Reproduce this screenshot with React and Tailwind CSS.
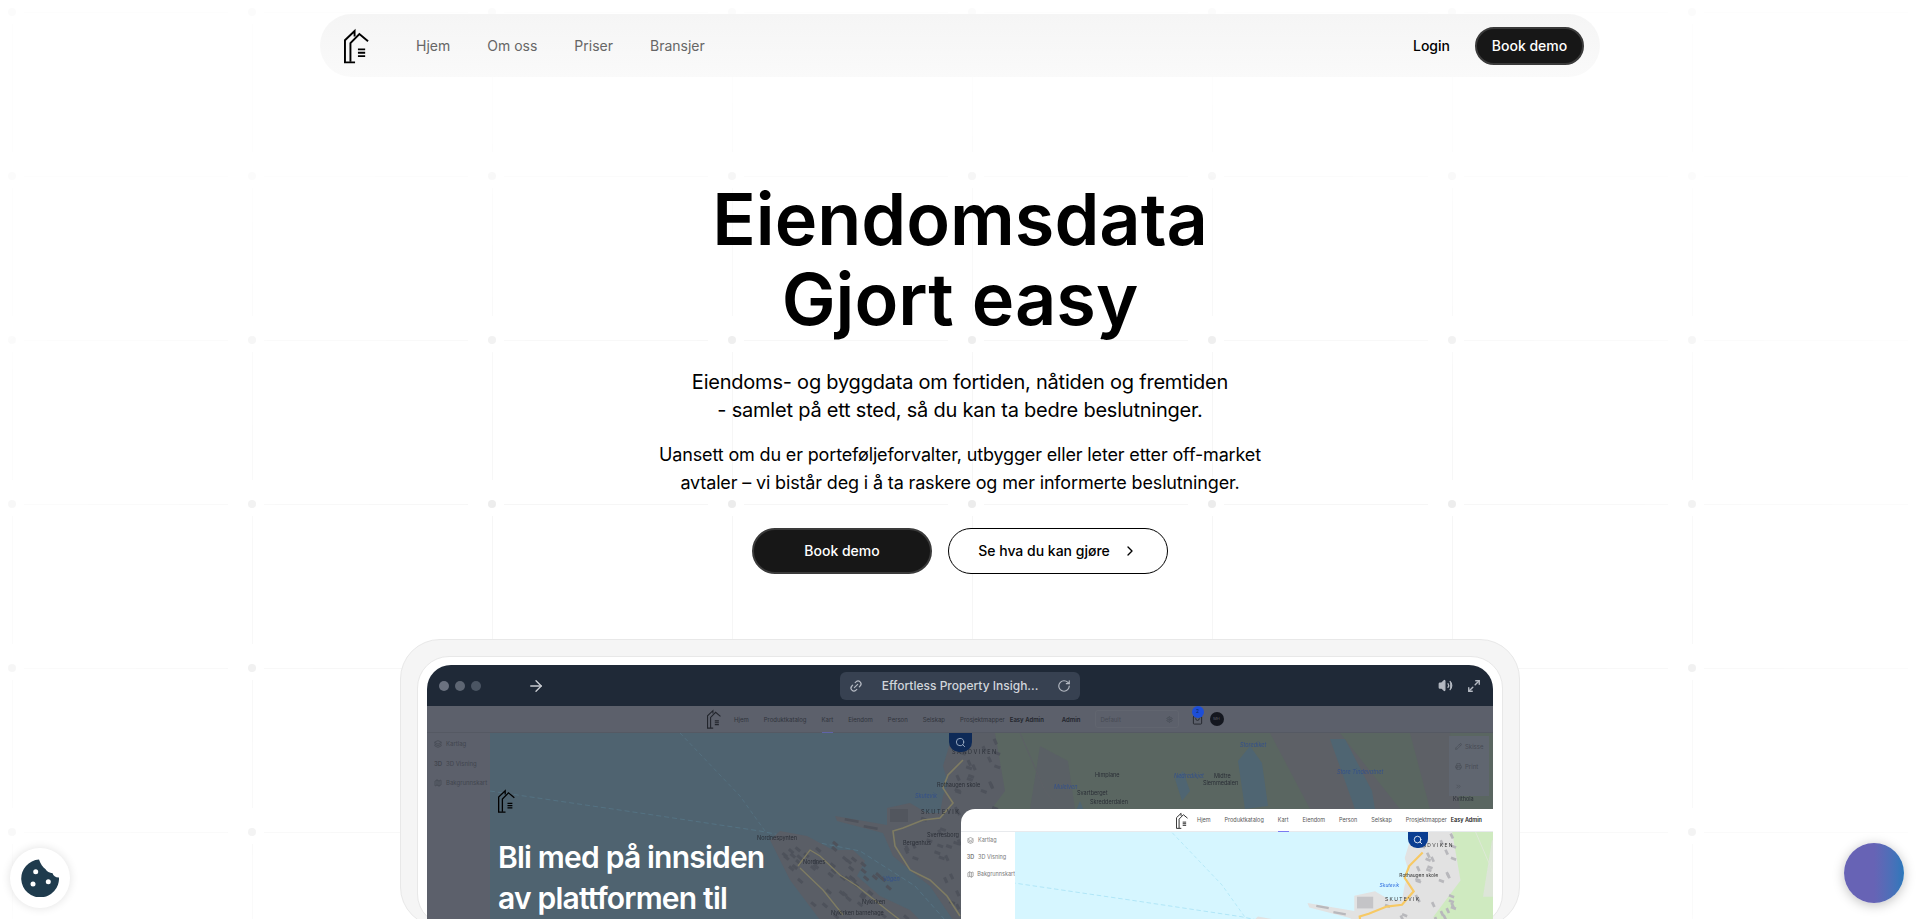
import React from 'react';
import { ArrowRight, ChevronRight, Link2, RotateCw, Volume2, Maximize2, Layers, Map as MapIcon, Search, Settings, ShoppingBag, Pencil, Printer, ChevronsRight } from 'lucide-react';

const navLinks = ['Hjem', 'Om oss', 'Priser', 'Bransjer'];
const appLinks = ['Hjem', 'Produktkatalog', 'Kart', 'Eiendom', 'Person', 'Selskap', 'Prosjektmapper'];

const darkMap = { water: '#4f6370', land: '#5a5e66', green: '#5a6661', strip: '#5d6066', lake: '#4f6572', road: '#7f7c62', roadWidth: 1.6, building: '#4e525b', label: '#2a2e36', blue: '#34508a', route: '#587c8e', labelLimit: 919, labelRight: 1494 };
const lightMap = { water: '#d6f6ff', land: '#e2e2e2', green: '#cfeac0', strip: '#dfe8d8', lake: '#c4ecf7', road: '#f7c964', roadWidth: 2.4, building: '#b8b8bc', label: '#333333', blue: '#2f6fe0', route: '#8fd8f0', labelLimit: 830, labelRight: 1000 };

const waterfront = '953,732 943,765 948,782 943,795 940,812 927,812 910,802 887,807 887,824 835,815 837,820 883,832 893,855 917,875 930,885 953,919 1500,919 1500,732';
const nordnes = '770,839 780,830 807,835 833,849 853,849 865,860 857,875 880,895 910,909 920,919 820,919 790,879';

const mapLabels = [
  ['Nordnespynten', 757, 839], ['Nordnes', 803, 863], ['Nykirken', 862, 903], ['Nykirken barnehage', 831, 914],
  ['Bergenhus', 903, 844], ['Sverresborg', 927, 836], ['S K U T E V I K', 921, 813], ['Rothaugen skole', 937, 786],
  ['S A N D V I K E N', 952, 753], ['Himplane', 1095, 776], ['Svartberget', 1077, 794], ['Skredderdalen', 1090, 803],
  ['Midtre', 1214, 777], ['Slemmedalen', 1203, 784], ['Kvithola', 1453, 800],
];
const blueLabels = [
  ['Skutevik', 915, 797], ['Vågen', 883, 880], ['Mulelven', 1054, 788], ['Nedredikjet', 1174, 777],
  ['Storediket', 1240, 746], ['Store Tindevatnet', 1337, 773],
];

const rnd = (i, k) => Math.abs(Math.sin(i * k) * 43758.5453) % 1;

// city blocks: first lot on the Nordnes peninsula, the rest on the mainland
const nordnesBlocks = Array.from({ length: 70 }, (_, i) => ({ x: 775 + rnd(i, 12.9898) * 130, y: 835 + rnd(i, 78.233) * 84, r: 40 }))
  .filter((b) => b.y <= 837 + (b.x - 770) * 1.5 && b.y >= 842 + (b.x - 853) * 1.04 && b.y >= 836);
const mainBlocks = Array.from({ length: 130 }, (_, i) => ({ x: 895 + rnd(i, 39.346) * 105, y: 735 + rnd(i, 11.135) * 180, r: i % 2 ? 65 : 20 }))
  .filter((b) => (b.y < 815 ? b.x > 955 : b.y < 860 ? b.x > 905 : b.x > 925 + (b.y - 860) * 0.5));
const blocks = [...nordnesBlocks, ...mainBlocks];

const MapShapes = ({ c }) => {
  const fits = ([, x, y]) => y < c.labelLimit && x < c.labelRight;
  return (
    <>
      <rect x="400" y="700" width="1200" height="300" fill={c.water} />
      <polyline points="490,790 640,812 760,830 860,850 915,885 945,919" fill="none" stroke={c.route} strokeWidth="0.6" strokeDasharray="5 3" />
      <polyline points="680,732 740,795 765,830" fill="none" stroke={c.route} strokeWidth="0.5" strokeDasharray="4 3" />
      <polygon points={waterfront} fill={c.land} />
      <polygon points={nordnes} fill={c.land} />
      <polygon points="995,732 1500,732 1500,919 985,919 975,830 1005,790" fill={c.green} />
      <polygon points="1040,745 1068,760 1075,808 1030,808" fill={c.land} opacity="0.7" />
      <polygon points="1270,732 1340,732 1400,808 1310,808" fill={c.strip} />
      <polygon points="1410,732 1450,732 1460,808 1430,808" fill={c.strip} />
      <polygon points="1238,760 1250,745 1262,762 1268,805 1245,808" fill={c.lake} />
      <polygon points="1330,738 1345,738 1372,790 1375,808 1355,808" fill={c.lake} />
      <polygon points="1175,778 1183,770 1190,790 1182,800" fill={c.lake} />
      <polygon points="1074,815 1080,800 1086,815" fill={c.lake} />
      {blocks.map((b, i) => (
        <rect key={i} x={b.x} y={b.y} width="6" height="3" fill={c.building} transform={`rotate(${b.r} ${b.x} ${b.y})`} />
      ))}
      <rect x="890" y="808" width="18" height="13" fill={c.building} opacity="0.7" />
      <rect x="845" y="817" width="14" height="2.5" fill={c.building} transform="rotate(10 845 817)" />
      <rect x="864" y="824" width="14" height="2.5" fill={c.building} transform="rotate(10 864 824)" />
      <polyline points="963,759 948,774 943,787 953,802 940,817 923,819 903,827 893,830 895,845 910,869 930,879 947,895 960,915" fill="none" stroke={c.road} strokeWidth={c.roadWidth} />
      <polyline points="798,865 810,849 820,855 840,874 857,885 887,909 900,919" fill="none" stroke={c.road} strokeWidth="1.3" />
      <polyline points="800,867 823,889 843,914" fill="none" stroke={c.road} strokeWidth="1.3" />
      <polyline points="1020,732 1045,790 1060,808" fill="none" stroke={c.strip} strokeWidth="1" />
      {mapLabels.filter(fits).map(([t, x, y]) => (
        <text key={t} x={x} y={y} fontSize="5.5" fill={c.label} fontFamily="Inter, sans-serif">{t}</text>
      ))}
      {blueLabels.filter(fits).map(([t, x, y]) => (
        <text key={t} x={x} y={y} fontSize="5.5" fontStyle="italic" fill={c.blue} fontFamily="Inter, sans-serif">{t}</text>
      ))}
    </>
  );
};

const Logo = ({ className }) => (
  <svg viewBox="0 0 26 36" fill="none" stroke="currentColor" strokeWidth="2" className={className}>
    <path d="M11.5 35H1V12L11 2.5V8" />
    <path d="M6.7 34.5V15L16 5.5L25 13" />
    <path d="M14.5 21.5H22M14.5 25H22M14.5 28.5H22" strokeWidth="2" />
  </svg>
);

const GridBackdrop = () => (
  <svg className="absolute inset-0 h-full w-full [mask-image:radial-gradient(ellipse_1150px_580px_at_960px_640px,black_45%,rgba(0,0,0,0.2)_100%)]">
    <defs>
      <pattern id="dots" x="0" y="0" width="240" height="164" patternUnits="userSpaceOnUse">
        <circle cx="12" cy="12" r="4" fill="#ececec" />
        <path d="M24 12.5H228M12.5 24V152" stroke="#f6f6f6" strokeWidth="1" />
      </pattern>
    </defs>
    <rect width="100%" height="100%" fill="url(#dots)" />
  </svg>
);

const SideItem = ({ icon, label }) => (
  <div className="flex h-[19.5px] items-center gap-[3px]">
    <span className="flex w-[10px] justify-center">{icon}</span>
    <span>{label}</span>
  </div>
);

const sideItems = (size) => [
  { icon: <Layers size={size} />, label: 'Kartlag' },
  { icon: <span className="font-semibold">3D</span>, label: '3D Visning' },
  { icon: <MapIcon size={size} />, label: 'Bakgrunnskart' },
];

const DemoScreen = () => (
  <div className="h-[260px] overflow-hidden rounded-t-[24px] bg-[#1f2937] font-['Inter',sans-serif]">
    <div className="grid h-[41px] grid-cols-[1fr_240px_1fr] items-center px-[12px]">
      <div className="flex items-center">
        <span className="h-[10px] w-[10px] rounded-full bg-[#6b7280]" />
        <span className="ml-[6px] h-[10px] w-[10px] rounded-full bg-[#5e6673]" />
        <span className="ml-[6px] h-[10px] w-[10px] rounded-full bg-[#4b5563]" />
        <ArrowRight size={18} strokeWidth={1.8} className="ml-[46px] text-[#c9ccd2]" />
      </div>
      <div className="flex h-[28px] items-center justify-between rounded-[6px] bg-[#374151] px-[9px] text-[12px] text-[#d1d5db]">
        <Link2 size={14} className="-rotate-45 text-[#b4b9c2]" />
        <span className="font-medium">Effortless Property Insigh...</span>
        <RotateCw size={14} className="text-[#b4b9c2]" />
      </div>
      <div className="flex items-center justify-end gap-[14px] text-[#b4b9c2]">
        <Volume2 size={15} fill="currentColor" />
        <Maximize2 size={14} strokeWidth={2.4} />
      </div>
    </div>

    <div className="flex h-[27px] items-center border-b border-[#555963] bg-[#5c606b] pl-[280px] text-[6px] text-[#30343c]">
      <Logo className="h-[20px] w-[14px] text-[#22252c]" />
      <div className="ml-[13px] flex items-center gap-[15px]">
        {appLinks.map((l) => (
          <span key={l} className="relative">
            {l}
            {l === 'Kart' && <span className="absolute -bottom-[9px] left-0 h-px w-full bg-[#5f64a8]" />}
          </span>
        ))}
      </div>
      <span className="ml-[5px] font-semibold text-[#22252c]">Easy Admin</span>
      <span className="ml-[18px] font-semibold text-[#22252c]">Admin</span>
      <div className="ml-[14px] flex h-[18px] w-[84px] items-center justify-between rounded-[3px] border border-[#61656f] px-[5px] text-[#474b54]">
        Default
        <Settings size={7} />
      </div>
      <div className="relative ml-[13px] text-[#22252c]">
        <ShoppingBag size={11} />
        <span className="absolute -top-[8px] -right-[1px] flex h-[12px] w-[12px] items-center justify-center rounded-full bg-[#1d4ed8] text-[5px] text-[#0f2a66]">2</span>
      </div>
      <span className="ml-[7px] flex h-[14px] w-[14px] items-center justify-center rounded-full bg-[#14171f] text-[4px] text-[#5c606b]">MH</span>
    </div>

    <div className="flex h-[192px]">
      <aside className="w-[63px] bg-[#5c606b] pt-[1px] pl-[6px] text-[6px] text-[#41454e]">
        {sideItems(8).map((s) => <SideItem key={s.label} {...s} />)}
      </aside>

      <div className="relative flex-1 overflow-hidden">
        <svg viewBox="490 732 1004 187" className="h-[187px] w-[1004px] blur-[0.4px]">
          <MapShapes c={darkMap} />
        </svg>
        <div className="absolute top-0 left-[459px] flex h-[19px] w-[23px] items-center justify-center rounded-b-[10px] bg-[#0e2a57] text-[#9fb0c6]">
          <Search size={11} />
        </div>
        <div className="absolute top-[3px] right-[4px] flex h-[60px] w-[40px] flex-col justify-around bg-[#606670] pl-[6px] text-[6px] text-[#474b54]">
          <span className="flex items-center gap-[3px]"><Pencil size={7} />Skisse</span>
          <span className="flex items-center gap-[3px]"><Printer size={7} />Print</span>
          <ChevronsRight size={7} />
        </div>

        <Logo className="absolute top-[56px] left-[8px] h-[24px] w-[17px] text-black" />
        <h2 className="absolute top-[104px] left-[8px] w-[300px] text-[30px] leading-[41px] font-semibold tracking-[-0.8px] text-white">
          Bli med på innsiden av plattformen til
        </h2>

        <div className="absolute top-[76px] left-[471px] w-[533px] overflow-hidden rounded-tl-[14px] bg-white">
          <div className="flex h-[23px] items-center justify-end border-b border-[#e8eaed] pr-[12px] text-[5.5px] text-[#555]">
            <Logo className="mr-[9px] h-[17px] w-[12px] text-[#222]" />
            <div className="flex items-center gap-[14px]">
              {appLinks.map((l) => (
                <span key={l} className="relative">
                  {l}
                  {l === 'Kart' && <span className="absolute -bottom-[8px] left-0 h-px w-full bg-[#7b7bf0]" />}
                </span>
              ))}
            </div>
            <span className="ml-[4px] font-semibold text-[#222]">Easy Admin</span>
          </div>
          <div className="flex h-[88px]">
            <div className="w-[54px] pl-[5px] text-[5.5px] text-[#777]">
              {sideItems(7).map((s) => <div key={s.label} className="flex h-[17px] items-center gap-[3px]"><span className="flex w-[9px] justify-center">{s.icon}</span>{s.label}</div>)}
            </div>
            <div className="relative flex-1 overflow-hidden">
              <svg viewBox="1015 831 479 88" className="h-[88px] w-[479px] blur-[0.2px]">
                <g transform="translate(556 168.5) scale(0.9)">
                  <MapShapes c={lightMap} />
                </g>
              </svg>
              <div className="absolute top-0 left-[393px] flex h-[16px] w-[20px] items-center justify-center rounded-b-[9px] bg-[#0a3d91] text-white">
                <Search size={10} />
              </div>
            </div>
          </div>
        </div>
      </div>
    </div>
  </div>
);

export default function App() {
  return (
    <div className="relative h-[919px] overflow-hidden bg-white font-['Inter',sans-serif] text-black">
      <GridBackdrop />

      <div className="relative">
        <header className="mx-auto mt-[14px] flex h-[63px] w-[1280px] items-center rounded-full bg-gradient-to-b from-[#f5f5f5] to-[#fafafa] pr-[16px] pl-[24px]">
          <Logo className="h-[36px] w-[25px] text-black" />
          <nav className="ml-[47px] flex gap-[37px] pb-[1px] text-[14px] text-[#666]">
            {navLinks.map((l) => <a key={l}>{l}</a>)}
          </nav>
          <a className="ml-auto pb-[1px] text-[14px] font-medium">Login</a>
          <button className="ml-[25px] h-[38px] w-[109px] rounded-full border-2 border-[#3a3a3a] bg-[#171717] pb-[1px] text-[14px] font-medium text-white">Book demo</button>
        </header>

        <main className="flex flex-col items-center">
          <h1 className="mt-[102px] text-center text-[72px] leading-[80px] font-semibold">
            Eiendomsdata<br />Gjort easy
          </h1>
          <p className="mt-[29px] text-center text-[20px] leading-[28px] tracking-[-0.22px]">
            Eiendoms- og byggdata om fortiden, nåtiden og fremtiden<br />- samlet på ett sted, så du kan ta bedre beslutninger.
          </p>
          <p className="mt-[17px] text-center text-[18px] leading-[28px] tracking-[-0.15px]">
            Uansett om du er porteføljeforvalter, utbygger eller leter etter off-market<br />avtaler – vi bistår deg i å ta raskere og mer informerte beslutninger.
          </p>
          <div className="mt-[31px] flex gap-[16px]">
            <button className="h-[46px] w-[180px] rounded-full border-2 border-[#3a3a3a] bg-[#171717] pb-[1px] text-[14px] font-medium text-white">Book demo</button>
            <button className="flex h-[46px] w-[220px] items-center justify-center gap-[12px] rounded-full border border-black bg-white pb-[1px] text-[14px] font-medium">
              Se hva du kan gjøre
              <ChevronRight size={16} />
            </button>
          </div>

          <div className="mt-[65px] w-[1120px] rounded-[40px] border border-[#e8e8e8] bg-[#f5f5f5] px-[16px] pt-[16px]">
            <div className="rounded-[32px] border border-[#e8e8e8] bg-white px-[9px] pt-[8px]">
              <DemoScreen />
            </div>
          </div>
        </main>
      </div>

      <button className="absolute top-[848px] left-[10px] flex h-[60px] w-[60px] items-center justify-center rounded-full bg-white shadow-[0_0_10px_rgba(0,0,0,0.12)]">
        <svg viewBox="0 0 38 38" className="h-[38px] w-[38px]">
          <path fill="#1f3b4d" d="M18 .6A18.9 18.9 0 1 0 38 18.4C34.8 18.6 32.2 16.8 31.6 14.2 28.6 14 25.6 12.4 24.6 10.2 21.8 8.6 19.4 4.4 18 .6Z" />
          <circle cx="14.7" cy="12.7" r="2.5" fill="#fff" />
          <circle cx="12" cy="25" r="2.5" fill="#fff" />
          <circle cx="27.3" cy="22.7" r="2.5" fill="#fff" />
        </svg>
      </button>
      <button className="absolute top-[843px] left-[1844px] h-[60px] w-[60px] rounded-full bg-gradient-to-r from-[#6763b5] from-50% to-[#2a78bb] shadow-[0_2px_12px_rgba(0,0,0,0.25)]" />
    </div>
  );
}
